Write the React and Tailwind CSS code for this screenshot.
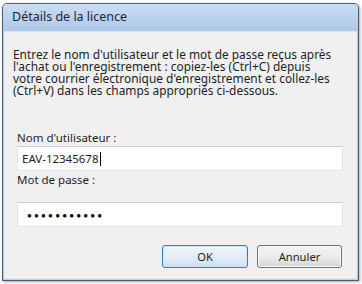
export default function App() {
  const font = { fontFamily: '"Noto Sans", "Open Sans", sans-serif' };
  return (
    <div className="w-[362px] h-[284px] bg-white pt-[3px] pl-[2px]" style={font}>
      <div className="w-[357px] h-[278px] flex flex-col border border-[#4d5b6c] rounded-t-[5px] shadow-[1px_1px_3px_rgba(0,0,0,0.35)] bg-[#b9d0ec]">
        <div className="h-[27px] flex items-center pl-[9px] text-[12.5px] text-[#1a2838] bg-gradient-to-b from-[#cbddf2] to-[#aec8e8] rounded-t-[4px]">
          Détails de la licence
        </div>
        <div className="flex-1 mx-[1px] mb-[1px] border border-[#dfe6ef] bg-[#f0f0f0] text-[11.9px] text-[#1e1e1e] leading-[12px] px-[8px]">
          <p className="mt-[16px] leading-[12px] whitespace-nowrap">
            Entrez le nom d'utilisateur et le mot de passe reçus après
            <br />
            l'achat ou l'enregistrement : copiez-les (Ctrl+C) depuis
            <br />
            votre courrier électronique d'enregistrement et collez-les
            <br />
            (Ctrl+V) dans les champs appropriés ci-dessous.
          </p>
          <div className="mt-[36px] pl-[4px] text-[11.5px]">Nom d'utilisateur :</div>
          <div className="mt-[2px] ml-[4px] w-[326px] h-[25px] bg-white border border-[#dde3ea] border-t-[#c9ced6] flex items-center pl-[4px] text-[11.5px]">
            EAV-12345678<span className="inline-block w-[1px] h-[14px] bg-black ml-[1px]"></span>
          </div>
          <div className="mt-[3px] pl-[4px] text-[11.5px]">Mot de passe :</div>
          <div className="mt-[16px] ml-[4px] w-[326px] h-[25px] bg-white border border-[#dde3ea] border-t-[#c9ced6] flex items-center pl-[9px] text-[8px] tracking-[2.2px] text-black">
            ●●●●●●●●●●●
          </div>
          <div className="mt-[18px] flex justify-end gap-[9px] pr-[6px]">
            <button className="w-[86px] h-[23px] rounded-[3px] border border-[#3c7fb1] bg-gradient-to-b from-[#eef5fb] via-[#e4eef7] to-[#cfe0ef] text-[11.2px] text-[#1e1e1e] shadow-[inset_0_0_0_1px_#c8e8f8]">
              OK
            </button>
            <button className="w-[85px] h-[23px] rounded-[3px] border border-[#707070] bg-gradient-to-b from-[#f2f2f2] via-[#ebebeb] to-[#d6d6d6] text-[11.2px] text-[#1e1e1e] shadow-[inset_0_0_0_1px_#fcfcfc]">
              Annuler
            </button>
          </div>
        </div>
      </div>
    </div>
  );
}
